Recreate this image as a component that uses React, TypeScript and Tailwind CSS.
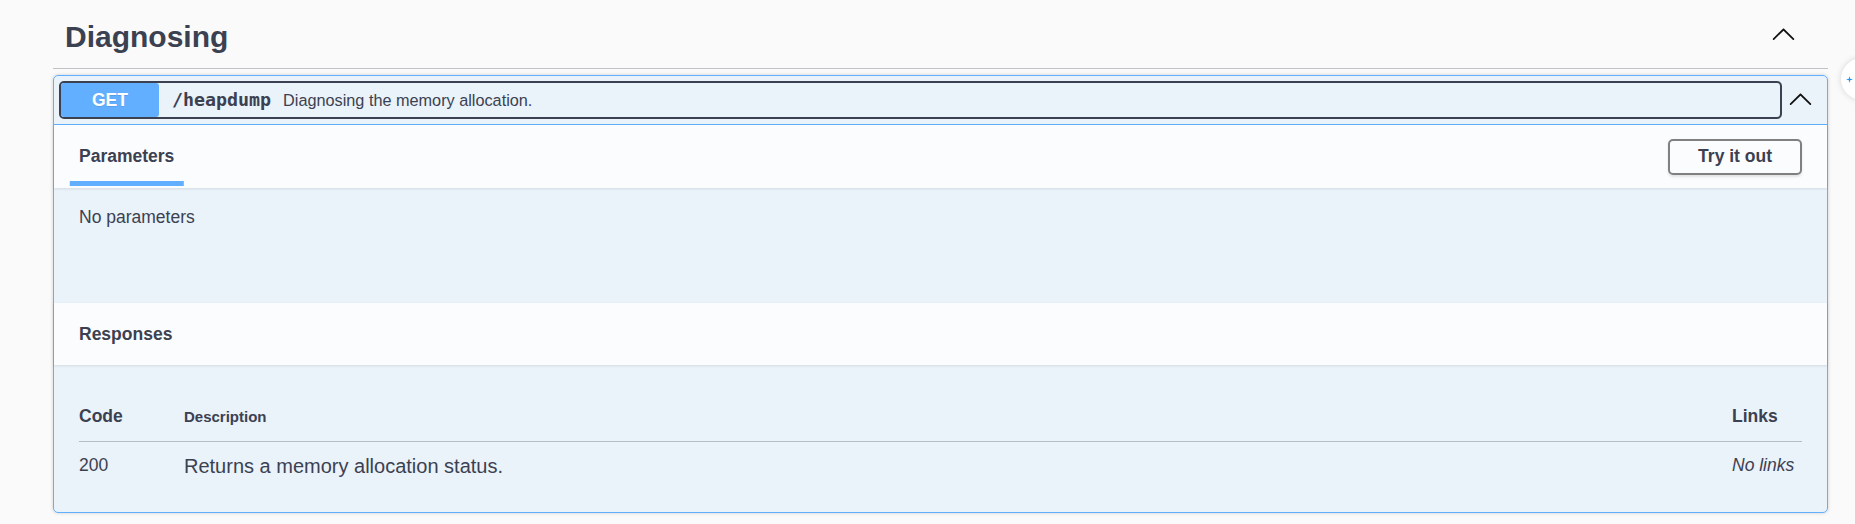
import React from "react";

function ArrowUp({ className }: { className?: string }) {
  return (
    <svg className={className} viewBox="0 0 20 20" width="25" height="25" aria-hidden="true">
      <path
        fill="#111111"
        d="M 17.418 14.908 C 17.69 15.176 18.127 15.176 18.397 14.908 C 18.667 14.64 18.668 14.207 18.397 13.939 L 10.489 6.109 C 10.219 5.841 9.782 5.841 9.51 6.109 L 1.602 13.939 C 1.332 14.207 1.332 14.64 1.602 14.908 C 1.873 15.176 2.311 15.176 2.581 14.908 L 10 7.767 L 17.418 14.908 Z"
      />
    </svg>
  );
}

export default function App() {
  return (
    <div className="relative w-full h-[524px] overflow-hidden bg-[#fafafa] text-[#3b4151] leading-[1.15] font-['Liberation_Sans',Arial,sans-serif]">
      <div className="ml-[53px] w-[1775px]">
        {/* Tag heading */}
        <div className="flex items-start pt-[20px] pb-[14px] pl-[12px] pr-[32px] border-b border-[#3b4151]/30">
          <h3 className="flex-1 text-[30px] font-bold leading-[34px]">Diagnosing</h3>
          <ArrowUp className="mt-[1px] w-[25px] h-[25px]" />
        </div>

        {/* Operation block */}
        <div className="mt-[6px] border border-[#61affe] rounded-[5px] bg-[#61affe]/10 shadow-[0_0_3.75px_rgba(0,0,0,0.19)]">
          {/* Summary */}
          <div className="flex items-center pl-[5px] pr-[14px] py-[5px] border-b border-[#61affe]">
            <div className="flex-1 flex items-center h-[38px] border-2 border-[#3b4151] rounded-[5px]">
              <span className="w-[98px] h-full flex items-center justify-center bg-[#61affe] rounded-[3px] text-white font-bold text-[17.5px] [text-shadow:0_1px_0_rgba(0,0,0,0.1)]">
                GET
              </span>
              <span className="pl-[13px] pr-[12px] font-['DejaVu_Sans_Mono',monospace] font-bold text-[18.3px]">
                /heapdump
              </span>
              <span className="text-[16.25px]">Diagnosing the memory allocation.</span>
            </div>
            <ArrowUp className="ml-[6px] mb-[4px] w-[25px] h-[25px]" />
          </div>

          {/* Parameters header */}
          <div className="flex items-center justify-between h-[63px] px-[25px] bg-white/80 shadow-[0_1.25px_2.5px_rgba(0,0,0,0.1)]">
            <div className="relative">
              <h4 className="text-[17.5px] font-bold">Parameters</h4>
              <span className="absolute left-1/2 -translate-x-1/2 w-[120%] h-[5px] -bottom-[19px] bg-[#61affe]" />
            </div>
            <button className="h-[36px] px-[28px] border-[2.5px] border-[#808080] rounded-[5px] bg-transparent text-[17.5px] font-bold text-[#3b4151] shadow-[0_1.25px_2.5px_rgba(0,0,0,0.1)]">
              Try it out
            </button>
          </div>

          {/* Parameters body */}
          <div className="h-[115px] pt-[19px] px-[25px]">
            <p className="text-[17.5px]">No parameters</p>
          </div>

          {/* Responses header */}
          <div className="flex items-center h-[62px] px-[25px] bg-white/80 shadow-[0_1.25px_2.5px_rgba(0,0,0,0.1)]">
            <h4 className="text-[17.5px] font-bold">Responses</h4>
          </div>

          {/* Responses body */}
          <div className="h-[147px] pt-[26px] px-[25px]">
            <table className="w-full">
              <thead>
                <tr>
                  <th className="w-[105px] py-[15px] text-left align-baseline text-[17.5px] font-bold border-b border-[#3b4151]/30">
                    Code
                  </th>
                  <th className="py-[15px] text-left align-baseline text-[15px] font-bold border-b border-[#3b4151]/30">
                    Description
                  </th>
                  <th className="w-[70px] py-[15px] text-left align-baseline text-[17.5px] font-bold border-b border-[#3b4151]/30">
                    Links
                  </th>
                </tr>
              </thead>
              <tbody>
                <tr>
                  <td className="pt-[12.5px] align-top text-[17.5px]">200</td>
                  <td className="pt-[12.5px] align-top text-[20px]">Returns a memory allocation status.</td>
                  <td className="pt-[12.5px] align-top text-[17.5px] italic">No links</td>
                </tr>
              </tbody>
            </table>
          </div>
        </div>
      </div>

      {/* Floating side button */}
      <div className="absolute left-[1841px] top-[58px] w-[42px] h-[42px] rounded-full bg-white shadow-[0_0_6px_rgba(0,0,0,0.15)]">
        <svg className="absolute left-[5px] top-[18px]" width="7" height="7" viewBox="0 0 10 10" aria-hidden="true">
          <path fill="#2196f3" d="M5 0 L6 4 L10 5 L6 6 L5 10 L4 6 L0 5 L4 4 Z" />
        </svg>
      </div>
    </div>
  );
}
